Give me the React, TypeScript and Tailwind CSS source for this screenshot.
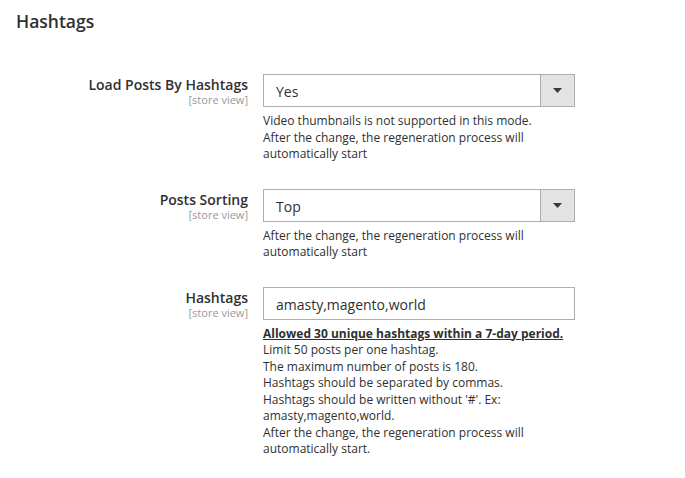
import React from 'react';

function Arrow() {
  return (
    <div className="flex h-full w-[34px] items-center justify-center border-l border-[#adadad] bg-[#e3e3e3]">
      <svg width="9" height="5" viewBox="0 0 9 5">
        <path d="M0 0 L9 0 L4.5 5 Z" fill="#41362f" />
      </svg>
    </div>
  );
}

function Label({ title }: { title: string }) {
  return (
    <div className="pt-[2px] text-right">
      <div className="text-[14px] font-semibold leading-[17px] text-[#303030]">{title}</div>
      <div className="text-[11px] leading-[13px] text-[#999999]">[store view]</div>
    </div>
  );
}

export default function App() {
  return (
    <div
      className="min-h-[478px] bg-white text-[#303030]"
      style={{ fontFamily: '"Open Sans", "Noto Sans", sans-serif' }}
    >
      <h2 className="px-[16px] pt-[10px] text-[17.5px] font-semibold leading-[23px] text-[#303030]">
        Hashtags
      </h2>

      <div className="mt-[41px] grid grid-cols-[232px_312px] gap-x-[15px] gap-y-[26px] pl-[16px]">
        {/* Load Posts By Hashtags */}
        <Label title="Load Posts By Hashtags" />
        <div>
          <div className="flex h-[33px] items-center border border-[#adadad] bg-white">
            <div className="flex-1 pl-[12px] pt-[2px] text-[14px]">Yes</div>
            <Arrow />
          </div>
          <div className="mt-[6px] text-[12px] leading-[16.5px]">
            Video thumbnails is not supported in this mode.
            <br />
            After the change, the regeneration process will automatically start
          </div>
        </div>

        {/* Posts Sorting */}
        <Label title="Posts Sorting" />
        <div>
          <div className="flex h-[33px] items-center border border-[#adadad] bg-white">
            <div className="flex-1 pl-[12px] pt-[2px] text-[14px]">Top</div>
            <Arrow />
          </div>
          <div className="mt-[6px] text-[12px] leading-[16.5px]">
            After the change, the regeneration process will automatically start
          </div>
        </div>

        {/* Hashtags */}
        <Label title="Hashtags" />
        <div>
          <div className="flex h-[33px] items-center border border-[#adadad] bg-white pl-[12px] pt-[2px] text-[14px]">
            amasty,magento,world
          </div>
          <div className="mt-[6px] text-[12px] leading-[16.5px]">
            <span className="font-bold underline">Allowed 30 unique hashtags within a 7-day period.</span>
            <br />
            Limit 50 posts per one hashtag.
            <br />
            The maximum number of posts is 180.
            <br />
            Hashtags should be separated by commas.
            <br />
            Hashtags should be written without '#'. Ex: amasty,magento,world.
            <br />
            After the change, the regeneration process will automatically start.
          </div>
        </div>
      </div>
    </div>
  );
}
